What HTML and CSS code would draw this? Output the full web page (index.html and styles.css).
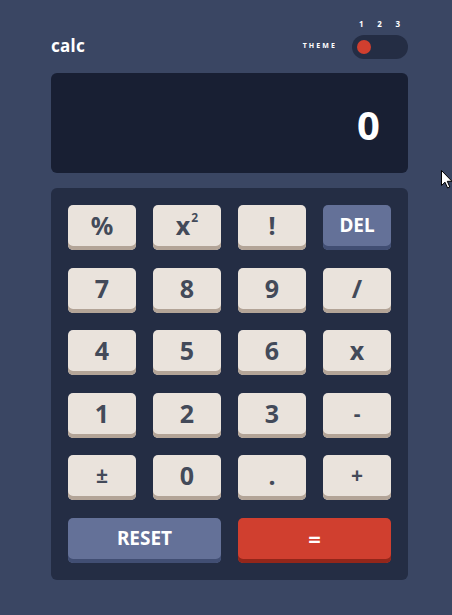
FILE: index.html
```html
<!DOCTYPE html>
<html lang="en">
<head>
<meta charset="utf-8">
<title>calc</title>
<link rel="stylesheet" href="styles.css">
</head>
<body>
<main class="calc">
  <header class="header">
    <h1 class="logo">calc</h1>
    <div class="theme">
      <span class="theme-label">THEME</span>
      <div class="theme-switch">
        <div class="theme-nums"><span>1</span><span>2</span><span>3</span></div>
        <div class="toggle"><span class="knob"></span></div>
      </div>
    </div>
  </header>
  <section class="display">0</section>
  <section class="keypad">
    <button class="key">%</button>
    <button class="key">x<sup class="sup">2</sup></button>
    <button class="key">!</button>
    <button class="key key-del">DEL</button>
    <button class="key">7</button>
    <button class="key">8</button>
    <button class="key">9</button>
    <button class="key">/</button>
    <button class="key">4</button>
    <button class="key">5</button>
    <button class="key">6</button>
    <button class="key">x</button>
    <button class="key">1</button>
    <button class="key">2</button>
    <button class="key">3</button>
    <button class="key key-small">-</button>
    <button class="key key-small">±</button>
    <button class="key">0</button>
    <button class="key">.</button>
    <button class="key key-small">+</button>
    <button class="key key-del key-wide">RESET</button>
    <button class="key key-eq key-wide">=</button>
  </section>
</main>
<svg class="cursor" width="12" height="19" viewBox="0 0 12 19" aria-hidden="true">
  <path d="M0.5 0.5 L0.5 15.5 L4 12.2 L6.6 18 L8.8 17 L6.3 11.3 L11 11.3 Z" fill="#fff" stroke="#000" stroke-width="1"/>
</svg>
</body>
</html>
```
FILE: styles.css
```css
* { box-sizing: border-box; }
html, body { margin: 0; padding: 0; }
body {
  background: #3a4663;
  font-family: "Noto Sans", "Open Sans", sans-serif;
  width: 452px;
  height: 615px;
  overflow: hidden;
  position: relative;
}
.calc {
  width: 357px;
  margin-left: 51px;
  padding-top: 20px;
}
.header {
  display: flex;
  justify-content: space-between;
  align-items: flex-end;
  height: 39px;
}
.logo {
  margin: 0 0 5px 0;
  color: #fff;
  font-size: 17px;
  font-weight: 700;
  line-height: 1;
  letter-spacing: 0.3px;
}
.theme {
  display: flex;
  align-items: flex-end;
  gap: 15px;
}
.theme-label {
  color: #fff;
  font-size: 7px;
  font-weight: 700;
  letter-spacing: 2.1px;
  line-height: 1;
  margin-bottom: 10px;
}
.theme-switch {
  display: flex;
  flex-direction: column;
  gap: 7px;
}
.theme-nums {
  display: flex;
  justify-content: space-between;
  padding: 0 8px 0 7px;
  color: #fff;
  font-size: 8px;
  font-weight: 700;
  line-height: 1;
}
.toggle {
  width: 56px;
  height: 24px;
  border-radius: 12px;
  background: #242d44;
  padding: 5px;
}
.knob {
  display: block;
  width: 14px;
  height: 14px;
  border-radius: 50%;
  background: #d03f2f;
}
.display {
  margin-top: 14px;
  height: 100px;
  border-radius: 6px;
  background: #181f33;
  color: #fff;
  font-size: 40px;
  font-weight: 700;
  display: flex;
  align-items: center;
  justify-content: flex-end;
  padding: 2px 28px 0 0;
}
.keypad {
  margin-top: 15px;
  background: #242d44;
  border-radius: 6px;
  padding: 17px;
  display: grid;
  grid-template-columns: repeat(4, 68px);
  grid-auto-rows: 45px;
  column-gap: 17px;
  row-gap: 17.5px;
}
.key {
  border: 0;
  margin: 0;
  border-radius: 5px;
  background: #eae3dc;
  box-shadow: inset 0 -4px 0 #b3a497;
  color: #434a59;
  font-family: inherit;
  font-size: 25px;
  font-weight: 700;
  line-height: 1;
  padding: 0 0 4px 0;
  display: flex;
  align-items: center;
  justify-content: center;
}
.key-small { font-size: 21px; }
.sup {
  font-size: 12px;
  vertical-align: 0;
  position: relative;
  top: -8px;
  margin-left: 1px;
}
.key-del {
  background: #647198;
  box-shadow: inset 0 -4px 0 #414e73;
  color: #fff;
  font-size: 19px;
}
.key-eq {
  background: #d03f2f;
  box-shadow: inset 0 -4px 0 #93261a;
  color: #fff;
  font-size: 22px;
}
.key-wide { grid-column: span 2; }
.cursor {
  position: absolute;
  left: 441px;
  top: 170px;
}
```
